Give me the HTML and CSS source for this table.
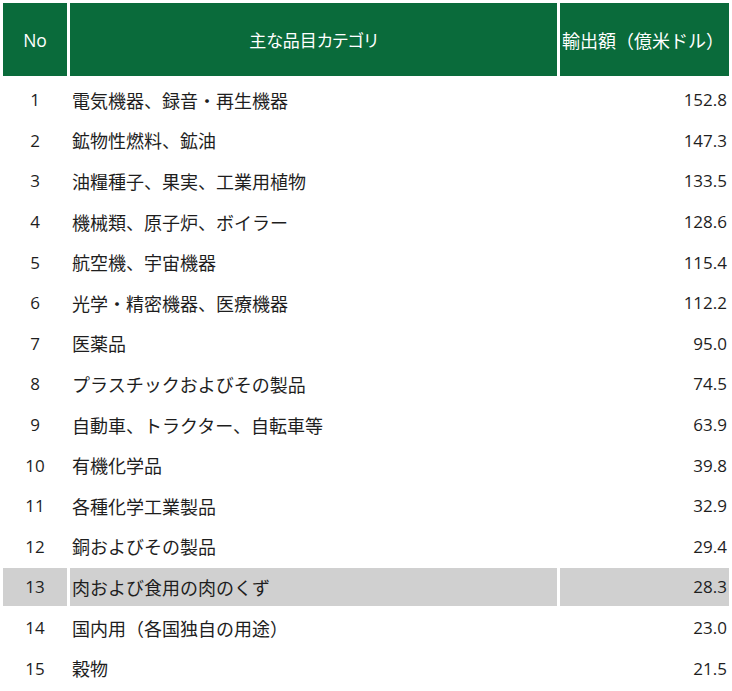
FILE: index.html
```html
<!DOCTYPE html>
<html lang="ja">
<head>
<meta charset="utf-8">
<link rel="stylesheet" href="styles.css">
</head>
<body>
<table class="trade">
  <thead>
    <tr class="head">
      <th class="c-no">No</th>
      <th class="c-cat">主な品目カテゴリ</th>
      <th class="c-val">輸出額（億米ドル）</th>
    </tr>
  </thead>
  <tbody>
    <tr><td class="c-no">1</td><td class="c-cat">電気機器、録音・再生機器</td><td class="c-val">152.8</td></tr>
    <tr><td class="c-no">2</td><td class="c-cat">鉱物性燃料、鉱油</td><td class="c-val">147.3</td></tr>
    <tr><td class="c-no">3</td><td class="c-cat">油糧種子、果実、工業用植物</td><td class="c-val">133.5</td></tr>
    <tr><td class="c-no">4</td><td class="c-cat">機械類、原子炉、ボイラー</td><td class="c-val">128.6</td></tr>
    <tr><td class="c-no">5</td><td class="c-cat">航空機、宇宙機器</td><td class="c-val">115.4</td></tr>
    <tr><td class="c-no">6</td><td class="c-cat">光学・精密機器、医療機器</td><td class="c-val">112.2</td></tr>
    <tr><td class="c-no">7</td><td class="c-cat">医薬品</td><td class="c-val">95.0</td></tr>
    <tr><td class="c-no">8</td><td class="c-cat">プラスチックおよびその製品</td><td class="c-val">74.5</td></tr>
    <tr><td class="c-no">9</td><td class="c-cat">自動車、トラクター、自転車等</td><td class="c-val">63.9</td></tr>
    <tr><td class="c-no">10</td><td class="c-cat">有機化学品</td><td class="c-val">39.8</td></tr>
    <tr><td class="c-no">11</td><td class="c-cat">各種化学工業製品</td><td class="c-val">32.9</td></tr>
    <tr><td class="c-no">12</td><td class="c-cat">銅およびその製品</td><td class="c-val">29.4</td></tr>
    <tr class="hl"><td class="c-no">13</td><td class="c-cat">肉および食用の肉のくず</td><td class="c-val">28.3</td></tr>
    <tr><td class="c-no">14</td><td class="c-cat">国内用（各国独自の用途）</td><td class="c-val">23.0</td></tr>
    <tr><td class="c-no">15</td><td class="c-cat">穀物</td><td class="c-val">21.5</td></tr>
  </tbody>
</table>
</body>
</html>
```
FILE: styles.css
```css
html, body {
  margin: 0;
  padding: 0;
  background: #ffffff;
}
body {
  font-family: "Open Sans", "Noto Sans CJK JP", sans-serif;
  font-size: 17px;
  color: #1e1e1e;
}
.trade {
  border-collapse: separate;
  border-spacing: 3px;
  width: 732px;
  table-layout: fixed;
}
.trade th,
.trade td {
  padding: 0 2px;
  font-weight: normal;
  white-space: nowrap;
}
.c-no { width: 60px; text-align: center; }
.c-cat { width: 483px; text-align: left; font-size: 18px; }
.c-val { width: 165px; text-align: right; }
.head th {
  height: 73px;
  background: #0a6b3b;
  color: #ffffff;
}
.head .c-no { font-size: 17.5px; }
.head .c-cat {
  text-align: center;
  font-size: 17px;
  font-feature-settings: "palt";
}
.head .c-val {
  text-align: left;
  font-size: 18px;
  padding-left: 2px;
}
.trade tbody td {
  height: 37.6px;
}
.trade tbody tr:first-child td {
  padding-top: 2px;
}
.hl td {
  background: #d0d0d0;
}
```
